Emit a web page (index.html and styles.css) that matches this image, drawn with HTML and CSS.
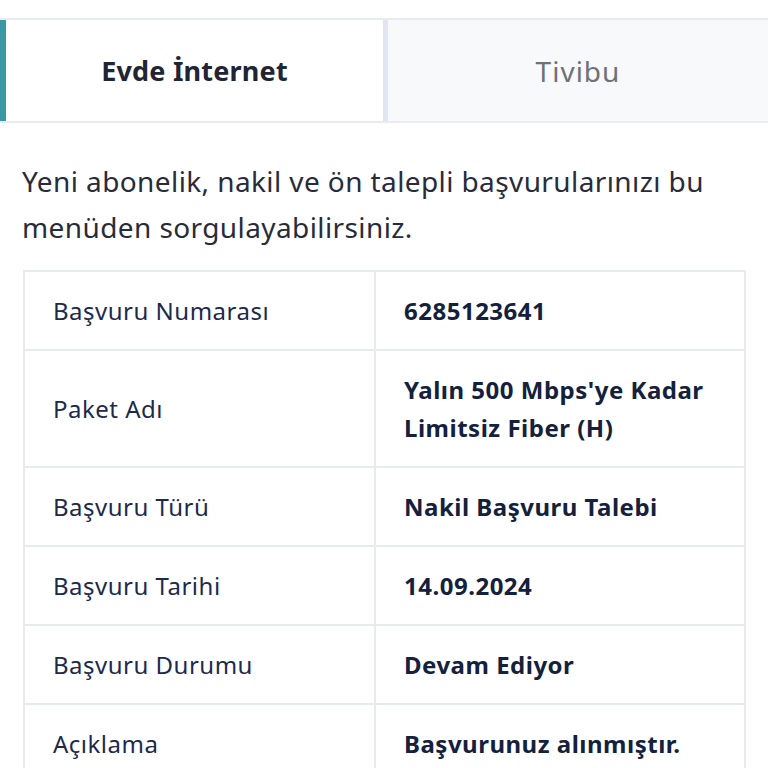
FILE: index.html
```html
<!DOCTYPE html>
<html lang="tr">
  <head>
    <meta charset="UTF-8" />
    <meta name="viewport" content="width=device-width, initial-scale=1.0" />
    <title>Başvuru Sorgulama</title>
    <link rel="stylesheet" href="styles.css">
  </head>
  <body>
    <div class="tabs">
      <button class="tab tab-active">Evde İnternet</button>
      <button class="tab">Tivibu</button>
    </div>

    <div class="content">
      <p class="intro">
        Yeni abonelik, nakil ve ön talepli başvurularınızı bu menüden sorgulayabilirsiniz.
      </p>

      <table class="details">
        <tr>
          <td>Başvuru Numarası</td>
          <td>6285123641</td>
        </tr>
        <tr>
          <td>Paket Adı</td>
          <td>Yalın 500 Mbps'ye Kadar Limitsiz Fiber (H)</td>
        </tr>
        <tr>
          <td>Başvuru Türü</td>
          <td>Nakil Başvuru Talebi</td>
        </tr>
        <tr>
          <td>Başvuru Tarihi</td>
          <td>14.09.2024</td>
        </tr>
        <tr>
          <td>Başvuru Durumu</td>
          <td>Devam Ediyor</td>
        </tr>
        <tr>
          <td>Açıklama</td>
          <td>Başvurunuz alınmıştır.</td>
        </tr>
      </table>
    </div>
  </body>
</html>
```

FILE: styles.css
```css
body {
  margin: 0px;
  background-color: rgb(255, 255, 255);
  font-family: "Noto Sans", Lato, sans-serif;
  color: rgb(38, 42, 56);
}

.tabs {
  margin-top: 18px;
  display: grid;
  grid-template-columns: 383px 1fr;
  border-top: 2px solid rgb(233, 235, 240);
  border-bottom: 2px solid rgb(233, 235, 240);
}

.tab {
  height: 101px;
  border: 0;
  font-family: inherit;
  font-size: 28px;
  letter-spacing: 1px;
  color: rgb(110, 113, 120);
  background-color: rgb(247, 249, 251);
  border-left: 5px solid rgb(225, 229, 238);
}

.tab-active {
  font-size: 27px;
  font-weight: 700;
  letter-spacing: 0.2px;
  color: rgb(32, 36, 52);
  background-color: rgb(255, 255, 255);
  border-left: 6px solid rgb(58, 152, 165);
}

.content {
  padding: 0px 22px;
}

.intro {
  margin: 35px 0px 20px;
  font-size: 28px;
  letter-spacing: 0.4px;
  line-height: 46px;
  color: rgb(40, 44, 58);
}

.details {
  width: 723px;
  margin-left: 1px;
  border-collapse: collapse;
  border: 2px solid rgb(232, 234, 238);
}

.details td {
  border: 2px solid rgb(232, 234, 238);
  padding: 20px 28px 19px 28px;
  font-size: 24px;
  letter-spacing: 0.5px;
  line-height: 38px;
  color: rgb(28, 42, 76);
  vertical-align: middle;
}

.details td:first-child {
  width: 293px;
}

.details td:last-child {
  font-weight: 700;
  color: rgb(20, 33, 61);
}
```
